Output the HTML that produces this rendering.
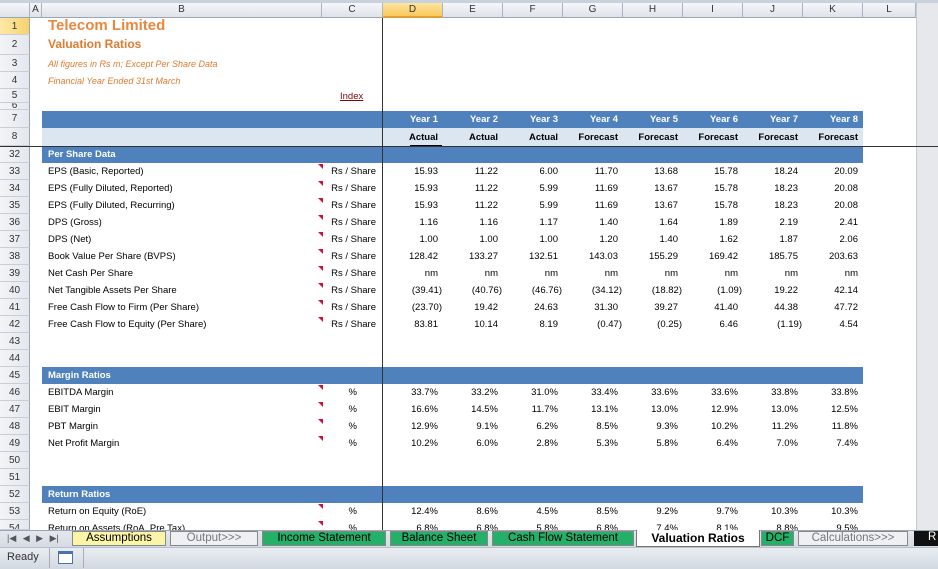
<!DOCTYPE html>
<html><head><meta charset="utf-8"><style>
*{margin:0;padding:0;box-sizing:border-box}
body{width:938px;height:569px;overflow:hidden;background:#fff;font-family:"Liberation Sans",Arial,sans-serif;font-size:9.5px;color:#000;position:relative}
.a{position:absolute;white-space:nowrap}
.ch{position:absolute;top:3px;height:15px;background:linear-gradient(#f4f6f9,#dfe3ea);border-right:1px solid #aab4c2;border-bottom:1px solid #9aa6b6;text-align:center;font-size:10px;line-height:14px;color:#333}
.rh{position:absolute;left:0;width:30px;background:linear-gradient(90deg,#f2f4f7,#e4e8ee);border-bottom:1px solid #c8ced8;border-right:1px solid #9aa6b6;text-align:center;font-size:10px;color:#333}
.r{position:absolute;left:30px;width:886px;height:17px;line-height:17px}
.r span{position:absolute;top:0}
.b{left:18px}
.c{left:292px;width:54px;text-align:right}
.p{left:292px;width:35px;text-align:right}
.v{width:60px;text-align:right;padding-right:5px}
.n{padding-right:1px}
.m{position:absolute;left:318px;width:0;height:0;border-top:5px solid #d0103a;border-left:5px solid transparent;margin-top:1px}
.tab{position:absolute;top:531px;height:15px;border:1px solid #888;text-align:center;font-size:11.5px;line-height:13px}
</style></head><body>
<div class="a" style="left:0;top:0;width:938px;height:3px;background:#c9d1dc"></div>
<div class="ch" style="left:0;width:30px"></div>
<div class="ch" style="left:30px;width:12px">A</div>
<div class="ch" style="left:42px;width:280px">B</div>
<div class="ch" style="left:322px;width:61px">C</div>
<div class="ch" style="left:383px;width:60px;background:linear-gradient(#fde4a0,#f9c95c);border-bottom:2px solid #e2a03a">D</div>
<div class="ch" style="left:443px;width:60px">E</div>
<div class="ch" style="left:503px;width:60px">F</div>
<div class="ch" style="left:563px;width:60px">G</div>
<div class="ch" style="left:623px;width:60px">H</div>
<div class="ch" style="left:683px;width:60px">I</div>
<div class="ch" style="left:743px;width:60px">J</div>
<div class="ch" style="left:803px;width:60px">K</div>
<div class="ch" style="left:863px;width:53px">L</div>
<div class="a" style="left:916px;top:3px;width:22px;height:527px;background:#e6e8ec;border-left:1px solid #c6ccd4"></div>

<div class="rh" style="top:18px;height:17px;line-height:17px;background:linear-gradient(90deg,#fde9a8,#f7d36e)">1</div>
<div class="rh" style="top:35px;height:20px;line-height:20px">2</div>
<div class="rh" style="top:55px;height:17px;line-height:17px">3</div>
<div class="rh" style="top:72px;height:17px;line-height:17px">4</div>
<div class="rh" style="top:89px;height:14px;line-height:14px">5</div>
<div class="rh" style="top:103px;height:7px;line-height:5px;overflow:hidden">6</div>
<div class="rh" style="top:110px;height:18px;line-height:18px">7</div>
<div class="rh" style="top:128px;height:18px;line-height:18px">8</div>
<div class="rh" style="top:146px;height:17px;line-height:17px">32</div>
<div class="rh" style="top:163px;height:17px;line-height:17px">33</div>
<div class="rh" style="top:180px;height:17px;line-height:17px">34</div>
<div class="rh" style="top:197px;height:17px;line-height:17px">35</div>
<div class="rh" style="top:214px;height:17px;line-height:17px">36</div>
<div class="rh" style="top:231px;height:17px;line-height:17px">37</div>
<div class="rh" style="top:248px;height:17px;line-height:17px">38</div>
<div class="rh" style="top:265px;height:17px;line-height:17px">39</div>
<div class="rh" style="top:282px;height:17px;line-height:17px">40</div>
<div class="rh" style="top:299px;height:17px;line-height:17px">41</div>
<div class="rh" style="top:316px;height:17px;line-height:17px">42</div>
<div class="rh" style="top:333px;height:17px;line-height:17px">43</div>
<div class="rh" style="top:350px;height:17px;line-height:17px">44</div>
<div class="rh" style="top:367px;height:17px;line-height:17px">45</div>
<div class="rh" style="top:384px;height:17px;line-height:17px">46</div>
<div class="rh" style="top:401px;height:17px;line-height:17px">47</div>
<div class="rh" style="top:418px;height:17px;line-height:17px">48</div>
<div class="rh" style="top:435px;height:17px;line-height:17px">49</div>
<div class="rh" style="top:452px;height:17px;line-height:17px">50</div>
<div class="rh" style="top:469px;height:17px;line-height:17px">51</div>
<div class="rh" style="top:486px;height:17px;line-height:17px">52</div>
<div class="rh" style="top:503px;height:17px;line-height:17px">53</div>
<div class="rh" style="top:520px;height:10px;line-height:17px;overflow:hidden">54</div>

<div class="a" style="left:48px;top:17px;font-size:15px;font-weight:bold;color:#e8883e">Telecom Limited</div>
<div class="a" style="left:48px;top:37px;font-size:12px;font-weight:bold;color:#e07b30">Valuation Ratios</div>
<div class="a" style="left:48px;top:59px;font-size:9px;font-style:italic;color:#e07b30">All figures in Rs m; Except Per Share Data</div>
<div class="a" style="left:48px;top:76px;font-size:9px;font-style:italic;color:#e07b30">Financial Year Ended 31st March</div>
<div class="a" style="left:340px;top:91px;font-size:9.5px;color:#7a0a0a;text-decoration:underline">Index</div>

<div class="a" style="left:42px;top:111px;width:821px;height:17px;background:#4f81bd"></div>
<div class="a" style="left:42px;top:128px;width:821px;height:18px;background:#dce6f1"></div>
<div class="r" style="top:111px;color:#fff;font-weight:bold">
<span class="v" style="left:353px">Year 1</span><span class="v" style="left:413px">Year 2</span><span class="v" style="left:473px">Year 3</span><span class="v" style="left:533px">Year 4</span><span class="v" style="left:593px">Year 5</span><span class="v" style="left:653px">Year 6</span><span class="v" style="left:713px">Year 7</span><span class="v" style="left:773px">Year 8</span></div>
<div class="r" style="top:129px;font-weight:bold">
<span class="v" style="left:353px">Actual</span><span class="v" style="left:413px">Actual</span><span class="v" style="left:473px">Actual</span><span class="v" style="left:533px">Forecast</span><span class="v" style="left:593px">Forecast</span><span class="v" style="left:653px">Forecast</span><span class="v" style="left:713px">Forecast</span><span class="v" style="left:773px">Forecast</span></div>
<div class="a" style="left:410px;top:145px;width:32px;height:1px;background:#000"></div>

<div class="a" style="left:42px;top:146px;width:821px;height:17px;background:#4f81bd"></div>
<div class="a" style="left:48px;top:146px;line-height:17px;color:#fff;font-weight:bold">Per Share Data</div>
<div class="a" style="left:42px;top:367px;width:821px;height:17px;background:#4f81bd"></div>
<div class="a" style="left:48px;top:367px;line-height:17px;color:#fff;font-weight:bold">Margin Ratios</div>
<div class="a" style="left:42px;top:486px;width:821px;height:17px;background:#4f81bd"></div>
<div class="a" style="left:48px;top:486px;line-height:17px;color:#fff;font-weight:bold">Return Ratios</div>

<div class="r" style="top:163px"><span class="b">EPS (Basic, Reported)</span><span class="c">Rs / Share</span><span class="v" style="left:353px">15.93</span><span class="v" style="left:413px">11.22</span><span class="v" style="left:473px">6.00</span><span class="v" style="left:533px">11.70</span><span class="v" style="left:593px">13.68</span><span class="v" style="left:653px">15.78</span><span class="v" style="left:713px">18.24</span><span class="v" style="left:773px">20.09</span></div>
<div class="r" style="top:180px"><span class="b">EPS (Fully Diluted, Reported)</span><span class="c">Rs / Share</span><span class="v" style="left:353px">15.93</span><span class="v" style="left:413px">11.22</span><span class="v" style="left:473px">5.99</span><span class="v" style="left:533px">11.69</span><span class="v" style="left:593px">13.67</span><span class="v" style="left:653px">15.78</span><span class="v" style="left:713px">18.23</span><span class="v" style="left:773px">20.08</span></div>
<div class="r" style="top:197px"><span class="b">EPS (Fully Diluted, Recurring)</span><span class="c">Rs / Share</span><span class="v" style="left:353px">15.93</span><span class="v" style="left:413px">11.22</span><span class="v" style="left:473px">5.99</span><span class="v" style="left:533px">11.69</span><span class="v" style="left:593px">13.67</span><span class="v" style="left:653px">15.78</span><span class="v" style="left:713px">18.23</span><span class="v" style="left:773px">20.08</span></div>
<div class="r" style="top:214px"><span class="b">DPS (Gross)</span><span class="c">Rs / Share</span><span class="v" style="left:353px">1.16</span><span class="v" style="left:413px">1.16</span><span class="v" style="left:473px">1.17</span><span class="v" style="left:533px">1.40</span><span class="v" style="left:593px">1.64</span><span class="v" style="left:653px">1.89</span><span class="v" style="left:713px">2.19</span><span class="v" style="left:773px">2.41</span></div>
<div class="r" style="top:231px"><span class="b">DPS (Net)</span><span class="c">Rs / Share</span><span class="v" style="left:353px">1.00</span><span class="v" style="left:413px">1.00</span><span class="v" style="left:473px">1.00</span><span class="v" style="left:533px">1.20</span><span class="v" style="left:593px">1.40</span><span class="v" style="left:653px">1.62</span><span class="v" style="left:713px">1.87</span><span class="v" style="left:773px">2.06</span></div>
<div class="r" style="top:248px"><span class="b">Book Value Per Share (BVPS)</span><span class="c">Rs / Share</span><span class="v" style="left:353px">128.42</span><span class="v" style="left:413px">133.27</span><span class="v" style="left:473px">132.51</span><span class="v" style="left:533px">143.03</span><span class="v" style="left:593px">155.29</span><span class="v" style="left:653px">169.42</span><span class="v" style="left:713px">185.75</span><span class="v" style="left:773px">203.63</span></div>
<div class="r" style="top:265px"><span class="b">Net Cash Per Share</span><span class="c">Rs / Share</span><span class="v" style="left:353px">nm</span><span class="v" style="left:413px">nm</span><span class="v" style="left:473px">nm</span><span class="v" style="left:533px">nm</span><span class="v" style="left:593px">nm</span><span class="v" style="left:653px">nm</span><span class="v" style="left:713px">nm</span><span class="v" style="left:773px">nm</span></div>
<div class="r" style="top:282px"><span class="b">Net Tangible Assets Per Share</span><span class="c">Rs / Share</span><span class="v n" style="left:353px">(39.41)</span><span class="v n" style="left:413px">(40.76)</span><span class="v n" style="left:473px">(46.76)</span><span class="v n" style="left:533px">(34.12)</span><span class="v n" style="left:593px">(18.82)</span><span class="v n" style="left:653px">(1.09)</span><span class="v" style="left:713px">19.22</span><span class="v" style="left:773px">42.14</span></div>
<div class="r" style="top:299px"><span class="b">Free Cash Flow to Firm (Per Share)</span><span class="c">Rs / Share</span><span class="v n" style="left:353px">(23.70)</span><span class="v" style="left:413px">19.42</span><span class="v" style="left:473px">24.63</span><span class="v" style="left:533px">31.30</span><span class="v" style="left:593px">39.27</span><span class="v" style="left:653px">41.40</span><span class="v" style="left:713px">44.38</span><span class="v" style="left:773px">47.72</span></div>
<div class="r" style="top:316px"><span class="b">Free Cash Flow to Equity (Per Share)</span><span class="c">Rs / Share</span><span class="v" style="left:353px">83.81</span><span class="v" style="left:413px">10.14</span><span class="v" style="left:473px">8.19</span><span class="v n" style="left:533px">(0.47)</span><span class="v n" style="left:593px">(0.25)</span><span class="v" style="left:653px">6.46</span><span class="v n" style="left:713px">(1.19)</span><span class="v" style="left:773px">4.54</span></div>

<div class="r" style="top:384px"><span class="b">EBITDA Margin</span><span class="p">%</span><span class="v" style="left:353px">33.7%</span><span class="v" style="left:413px">33.2%</span><span class="v" style="left:473px">31.0%</span><span class="v" style="left:533px">33.4%</span><span class="v" style="left:593px">33.6%</span><span class="v" style="left:653px">33.6%</span><span class="v" style="left:713px">33.8%</span><span class="v" style="left:773px">33.8%</span></div>
<div class="r" style="top:401px"><span class="b">EBIT Margin</span><span class="p">%</span><span class="v" style="left:353px">16.6%</span><span class="v" style="left:413px">14.5%</span><span class="v" style="left:473px">11.7%</span><span class="v" style="left:533px">13.1%</span><span class="v" style="left:593px">13.0%</span><span class="v" style="left:653px">12.9%</span><span class="v" style="left:713px">13.0%</span><span class="v" style="left:773px">12.5%</span></div>
<div class="r" style="top:418px"><span class="b">PBT Margin</span><span class="p">%</span><span class="v" style="left:353px">12.9%</span><span class="v" style="left:413px">9.1%</span><span class="v" style="left:473px">6.2%</span><span class="v" style="left:533px">8.5%</span><span class="v" style="left:593px">9.3%</span><span class="v" style="left:653px">10.2%</span><span class="v" style="left:713px">11.2%</span><span class="v" style="left:773px">11.8%</span></div>
<div class="r" style="top:435px"><span class="b">Net Profit Margin</span><span class="p">%</span><span class="v" style="left:353px">10.2%</span><span class="v" style="left:413px">6.0%</span><span class="v" style="left:473px">2.8%</span><span class="v" style="left:533px">5.3%</span><span class="v" style="left:593px">5.8%</span><span class="v" style="left:653px">6.4%</span><span class="v" style="left:713px">7.0%</span><span class="v" style="left:773px">7.4%</span></div>

<div class="r" style="top:503px"><span class="b">Return on Equity (RoE)</span><span class="p">%</span><span class="v" style="left:353px">12.4%</span><span class="v" style="left:413px">8.6%</span><span class="v" style="left:473px">4.5%</span><span class="v" style="left:533px">8.5%</span><span class="v" style="left:593px">9.2%</span><span class="v" style="left:653px">9.7%</span><span class="v" style="left:713px">10.3%</span><span class="v" style="left:773px">10.3%</span></div>
<div class="a" style="left:30px;top:520px;width:886px;height:10px;overflow:hidden"><div class="r" style="left:0;top:0"><span class="b">Return on Assets (RoA, Pre Tax)</span><span class="p">%</span><span class="v" style="left:353px">6.8%</span><span class="v" style="left:413px">6.8%</span><span class="v" style="left:473px">5.8%</span><span class="v" style="left:533px">6.8%</span><span class="v" style="left:593px">7.4%</span><span class="v" style="left:653px">8.1%</span><span class="v" style="left:713px">8.8%</span><span class="v" style="left:773px">9.5%</span></div></div>

<div class="m" style="top:163px"></div><div class="m" style="top:180px"></div><div class="m" style="top:197px"></div><div class="m" style="top:214px"></div><div class="m" style="top:231px"></div><div class="m" style="top:248px"></div><div class="m" style="top:265px"></div><div class="m" style="top:282px"></div><div class="m" style="top:299px"></div><div class="m" style="top:316px"></div>
<div class="m" style="top:384px"></div><div class="m" style="top:401px"></div><div class="m" style="top:418px"></div><div class="m" style="top:435px"></div><div class="m" style="top:503px"></div><div class="m" style="top:520px"></div>

<div class="a" style="left:382px;top:18px;width:1px;height:512px;background:#333"></div>
<div class="a" style="left:0;top:146px;width:938px;height:1px;background:#333"></div>

<div class="a" style="left:0;top:530px;width:938px;height:17px;background:linear-gradient(#e4e8ee,#d6dbe3);border-top:1px solid #9aa6b6"></div>
<div class="a" style="left:7px;top:531px;font-size:9px;line-height:15px;color:#555;word-spacing:4px">|◀ ◀ ▶ ▶|</div>
<div class="tab" style="left:72px;width:94px;background:#fbf5a8">Assumptions</div>
<div class="tab" style="left:170px;width:88px;background:#eef0f3;color:#777">Output&gt;&gt;&gt;</div>
<div class="tab" style="left:262px;width:124px;background:#25b06a">Income Statement</div>
<div class="tab" style="left:390px;width:98px;background:#25b06a">Balance Sheet</div>
<div class="tab" style="left:492px;width:142px;background:#25b06a">Cash Flow Statement</div>
<div class="a" style="left:636px;top:530px;width:124px;height:17px;background:#fff;border:1px solid #777;border-top:none;text-align:center;font-size:12px;font-weight:bold;line-height:16px">Valuation Ratios</div>
<div class="tab" style="left:761px;width:33px;background:#25b06a">DCF</div>
<div class="tab" style="left:798px;width:110px;background:#eef0f3;color:#777">Calculations&gt;&gt;&gt;</div>
<div class="a" style="left:914px;top:531px;width:24px;height:15px;background:#111;color:#fff;font-size:11.5px;line-height:13px;padding-left:14px">R</div>

<div class="a" style="left:0;top:547px;width:938px;height:22px;background:linear-gradient(#e9edf2,#d3d9e1);border-top:1px solid #b8c0cc"></div>
<div class="a" style="left:7px;top:551px;font-size:11px;color:#333">Ready</div>
<div class="a" style="left:49px;top:548px;width:1px;height:20px;background:#aab"></div>
<div class="a" style="left:58px;top:551px;width:15px;height:13px;background:#fff;border:1px solid #4a72b0;border-top:3px solid #4a72b0"></div>
<div class="a" style="left:83px;top:548px;width:1px;height:20px;background:#aab"></div>
</body></html>
